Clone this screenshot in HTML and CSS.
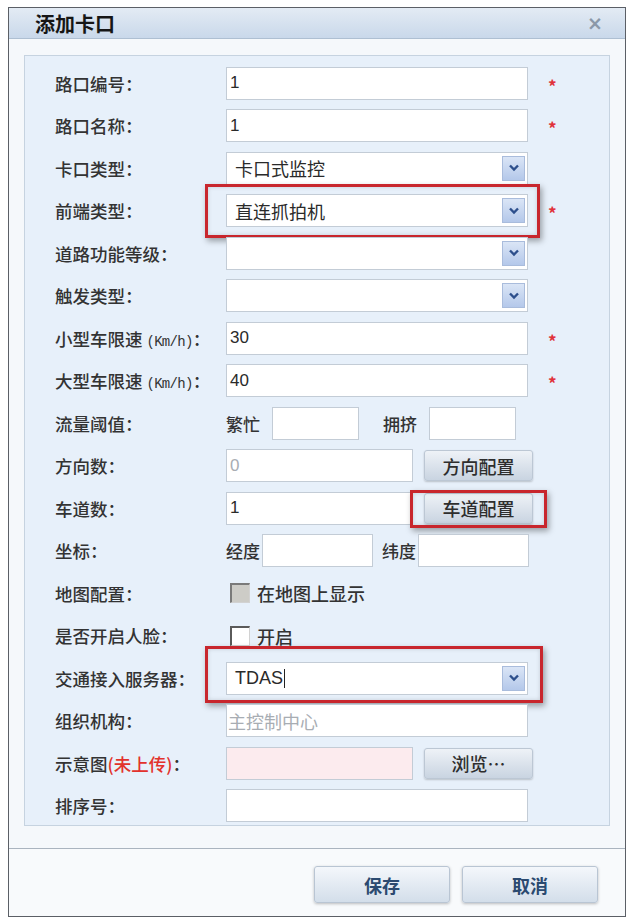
FILE: index.html
```html
<!DOCTYPE html>
<html lang="zh-CN">
<head>
  <meta charset="UTF-8">
  <title>添加卡口</title>
  <link rel="stylesheet" href="styles.css">
</head>
<body>

<div class="dialog">
  <div class="titlebar">
    <span class="title">添加卡口</span>
    <span class="close">×</span>
  </div>

  <div class="dialog-body">
    <div class="panel">
      <div class="row">
        <span class="label">路口编号：</span>
        <div class="field"><div class="box">1</div></div>
        <span class="req">*</span>
      </div>
      <div class="row">
        <span class="label">路口名称：</span>
        <div class="field"><div class="box">1</div></div>
        <span class="req">*</span>
      </div>
      <div class="row">
        <span class="label">卡口类型：</span>
        <div class="field"><div class="box select">卡口式监控<span class="arrow"><svg width="12" height="8" viewBox="0 0 12 8"><path d="M2 1.5l4 4 4-4" /></svg></span></div></div>
      </div>
      <div class="row">
        <span class="label">前端类型：</span>
        <div class="field mark mark-front"><div class="box select">直连抓拍机<span class="arrow"><svg width="12" height="8" viewBox="0 0 12 8"><path d="M2 1.5l4 4 4-4" /></svg></span></div></div>
        <span class="req">*</span>
      </div>
      <div class="row">
        <span class="label">道路功能等级：</span>
        <div class="field"><div class="box select"><span class="arrow"><svg width="12" height="8" viewBox="0 0 12 8"><path d="M2 1.5l4 4 4-4" /></svg></span></div></div>
      </div>
      <div class="row">
        <span class="label">触发类型：</span>
        <div class="field"><div class="box select"><span class="arrow"><svg width="12" height="8" viewBox="0 0 12 8"><path d="M2 1.5l4 4 4-4" /></svg></span></div></div>
      </div>
      <div class="row">
        <span class="label">小型车限速 <span class="unit">(Km/h)</span>：</span>
        <div class="field"><div class="box">30</div></div>
        <span class="req">*</span>
      </div>
      <div class="row">
        <span class="label">大型车限速 <span class="unit">(Km/h)</span>：</span>
        <div class="field"><div class="box">40</div></div>
        <span class="req">*</span>
      </div>
      <div class="row">
        <span class="label">流量阈值：</span>
        <div class="field inline">
          <span class="sub">繁忙</span><div class="box small"></div>
          <span class="sub sub-gap">拥挤</span><div class="box small"></div>
        </div>
      </div>
      <div class="row">
        <span class="label">方向数：</span>
        <div class="field inline">
          <div class="box half muted">0</div>
          <button class="btn">方向配置</button>
        </div>
      </div>
      <div class="row">
        <span class="label">车道数：</span>
        <div class="field inline">
          <div class="box half">1</div>
          <button class="btn mark mark-lane">车道配置</button>
        </div>
      </div>
      <div class="row">
        <span class="label">坐标：</span>
        <div class="field inline coords">
          <span class="sub">经度</span><div class="box coord"></div>
          <span class="sub">纬度</span><div class="box coord"></div>
        </div>
      </div>
      <div class="row">
        <span class="label">地图配置：</span>
        <div class="field inline">
          <span class="check grey"></span><span class="check-text">在地图上显示</span>
        </div>
      </div>
      <div class="row">
        <span class="label">是否开启人脸：</span>
        <div class="field inline">
          <span class="check"></span><span class="check-text">开启</span>
        </div>
      </div>
      <div class="row">
        <span class="label">交通接入服务器：</span>
        <div class="field mark mark-server"><div class="box select">TDAS<span class="caret"></span><span class="arrow"><svg width="12" height="8" viewBox="0 0 12 8"><path d="M2 1.5l4 4 4-4" /></svg></span></div></div>
      </div>
      <div class="row">
        <span class="label">组织机构：</span>
        <div class="field"><div class="box muted flat">主控制中心</div></div>
      </div>
      <div class="row">
        <span class="label">示意图 <span class="warn">(未上传)</span>：</span>
        <div class="field inline">
          <div class="box half pink"></div>
          <button class="btn">浏览…</button>
        </div>
      </div>
      <div class="row">
        <span class="label">排序号：</span>
        <div class="field"><div class="box"></div></div>
      </div>
    </div>
  </div>

  <div class="footer">
    <button class="action">保存</button>
    <button class="action">取消</button>
  </div>
</div>

</body>
</html>
```

FILE: styles.css
```css
body {
  margin: 0;
  background-color: #ffffff;
  font-family: 'Noto Sans CJK SC', 'Noto Sans', sans-serif;
  color: #3c3c3c;
}

.dialog {
  width: 618px;
  height: 910px;
  margin: 7px 0 0 8px;
  box-sizing: border-box;
  border: 1px solid #5b5f66;
  background-color: #f5f8fb;
  display: flex;
  flex-direction: column;
}

.titlebar {
  height: 31px;
  flex-shrink: 0;
  display: flex;
  align-items: center;
  justify-content: space-between;
  padding: 0 22px 0 26px;
  background: linear-gradient(#e3ebf4, #c9d8ea);
  border-bottom: 1px solid #aebfd2;
  box-sizing: border-box;
}

.title {
  font-size: 20px;
  font-weight: bold;
  color: #161616;
}

.close {
  font-family: 'DejaVu Sans', sans-serif;
  font-size: 19px;
  font-weight: bold;
  color: #8b98a8;
}

.dialog-body {
  padding: 16px 15px 0 15px;
  height: 809px;
  box-sizing: border-box;
  flex-shrink: 0;
}

.panel {
  border: 1px solid #c6d3e0;
  background-color: #e7f0fa;
  padding: 6px 0 0 30px;
  height: 771px;
  box-sizing: border-box;
}

.row {
  display: grid;
  grid-template-columns: 171px 302px 1fr;
  height: 42.5px;
  align-items: center;
}

.label {
  font-size: 17.5px;
  font-weight: 500;
  color: #333333;
  white-space: nowrap;
}

.unit {
  font-family: 'Liberation Mono', monospace;
  font-size: 14px;
  letter-spacing: -0.7px;
  font-weight: normal;
}

.warn {
  color: #e2322c;
  margin-left: -4px;
}

.req {
  color: #e0323a;
  font-size: 17px;
  font-weight: bold;
  padding-left: 20px;
  margin-top: 4px;
}

.field {
  position: relative;
  display: flex;
  align-items: center;
}

.box {
  position: relative;
  width: 302px;
  height: 33px;
  box-sizing: border-box;
  border: 1px solid #c3ccd6;
  background-color: #ffffff;
  font-family: 'Liberation Sans', 'Noto Sans CJK SC', sans-serif;
  font-size: 17px;
  color: #2a2a2a;
  padding-left: 3px;
  display: flex;
  align-items: center;
  flex-shrink: 0;
}

.box.select {
  padding-left: 8px;
  font-size: 18px;
}

.box.muted {
  color: #a8adb3;
}

.box.flat {
  font-size: 18px;
  padding-left: 1px;
}

.box.half {
  width: 187px;
}

.box.small {
  width: 87px;
}

.box.coord {
  width: 111px;
}

.box.pink {
  background-color: #fcebee;
}

.caret {
  display: inline-block;
  width: 1px;
  height: 19px;
  margin-left: 1px;
  background-color: #222;
}

.arrow {
  position: absolute;
  right: 2px;
  top: 3px;
  bottom: 3px;
  width: 23px;
  display: flex;
  align-items: center;
  justify-content: center;
  background: linear-gradient(#dae5f6, #b4c8ea);
  border: 1px solid #a9bcdc;
  box-sizing: border-box;
}

.arrow path {
  fill: none;
  stroke: #2d4f8c;
  stroke-width: 2.4;
}

.inline .sub {
  font-size: 17px;
  font-weight: 500;
  color: #333333;
  margin-right: 12px;
  white-space: nowrap;
}

.inline .sub-gap {
  margin-left: 24px;
}

.coords .box {
  margin-right: 9px;
}

.coords .sub {
  margin-right: 2px;
}

.btn {
  position: relative;
  width: 109px;
  height: 31px;
  margin-left: 11px;
  flex-shrink: 0;
  border: 1px solid #bcc7d4;
  border-radius: 3px;
  background: linear-gradient(#eef2f7, #c9d4e1);
  box-shadow: 0 1px 2px rgba(0, 0, 0, 0.2);
  font-family: 'Noto Sans CJK SC', sans-serif;
  font-size: 18px;
  font-weight: 500;
  color: #2e2e2e;
  padding: 0;
}

.check {
  width: 20px;
  height: 20px;
  margin-left: 4px;
  box-sizing: border-box;
  background-color: #ffffff;
  border-top: 2px solid #5a5a5a;
  border-left: 2px solid #5a5a5a;
  border-right: 1px solid #d2d2d2;
  border-bottom: 1px solid #d2d2d2;
}

.check.grey {
  background-color: #cdccc7;
  border-top-color: #7a7a7a;
  border-left-color: #7a7a7a;
}

.check-text {
  font-size: 18px;
  font-weight: 500;
  color: #333;
  margin-left: 7px;
}

/* red highlight frames drawn over the screenshot */
.mark::after {
  content: '';
  position: absolute;
  border: 3px solid #c8262d;
  box-shadow: 2px 3px 6px rgba(0, 0, 0, 0.35), inset 0 0 4px rgba(0, 0, 0, 0.15);
  pointer-events: none;
}

.mark-front::after {
  left: -21px;
  right: -12px;
  top: -10px;
  bottom: -11px;
}

.mark-lane::after {
  left: -15px;
  right: -15px;
  top: -4px;
  bottom: -5px;
}

.mark-server::after {
  left: -21px;
  right: -15px;
  top: -16px;
  bottom: -8px;
}

.footer {
  flex: 1;
  border-top: 1px solid #aab4bf;
  background-color: #f8fafc;
  display: flex;
  justify-content: flex-end;
  align-items: flex-start;
  gap: 12px;
  padding: 17px 27px 0 0;
}

.action {
  width: 136px;
  height: 37px;
  border: 1px solid #b9c5d3;
  border-radius: 3px;
  background: linear-gradient(#f4f7fb, #d3deea);
  box-shadow: 0 1px 3px rgba(0, 0, 0, 0.25);
  font-family: 'Noto Sans CJK SC', sans-serif;
  font-size: 18px;
  font-weight: bold;
  color: #2b4a70;
}
```
